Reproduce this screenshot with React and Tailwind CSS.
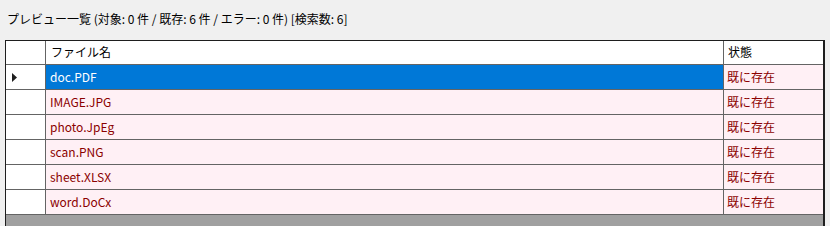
import React from 'react';

const rows = ['doc.PDF', 'IMAGE.JPG', 'photo.JpEg', 'scan.PNG', 'sheet.XLSX', 'word.DoCx'];

const App = () => {
  return (
    <div
      className="w-[830px] h-[226px] bg-[#f0f0f0] overflow-hidden text-[12px] text-black"
      style={{ fontFamily: '"Noto Sans CJK JP", "Noto Sans", sans-serif' }}
    >
      {/* Title */}
      <div className="pl-[7px] pt-[10px] h-[40px] leading-[18px]">
        プレビュー一覧 (対象: 0 件 / 既存: 6 件 / エラー: 0 件) [検索数: 6]
      </div>

      {/* Grid */}
      <div className="ml-[5px] w-[820px] h-[186px] bg-[#a0a0a0] border-l border-t border-r-2 border-[#1e1e1e]">
        {/* Header */}
        <div className="flex h-[24px] bg-white border-b border-[#646464]">
          <div className="w-[40px] border-r border-[#646464]"></div>
          <div className="w-[678px] border-r border-[#646464] pl-[5px] leading-[22px]">ファイル名</div>
          <div className="flex-1 pl-[4px] leading-[22px]">状態</div>
        </div>

        {rows.map((name, i) => (
          <div key={name} className="flex h-[25px] border-b border-[#646464]">
            <div className="w-[40px] bg-white border-r border-[#646464] flex items-center pl-[6px]">
              {i === 0 && (
                <svg width="5" height="9" viewBox="0 0 5 9">
                  <path d="M0 0 L5 4.5 L0 9 Z" fill="#1e1e1e" />
                </svg>
              )}
            </div>
            <div
              className={
                i === 0
                  ? 'w-[678px] bg-[#0078d7] text-white border-r border-[#646464] pl-[4px] leading-[24px]'
                  : 'w-[678px] bg-[#fff0f5] text-[#8b0000] border-r border-[#646464] pl-[4px] leading-[24px]'
              }
            >
              {name}
            </div>
            <div className="flex-1 bg-[#fff0f5] text-[#8b0000] pl-[3px] leading-[24px]">既に存在</div>
          </div>
        ))}
      </div>
    </div>
  );
};

export default App;
